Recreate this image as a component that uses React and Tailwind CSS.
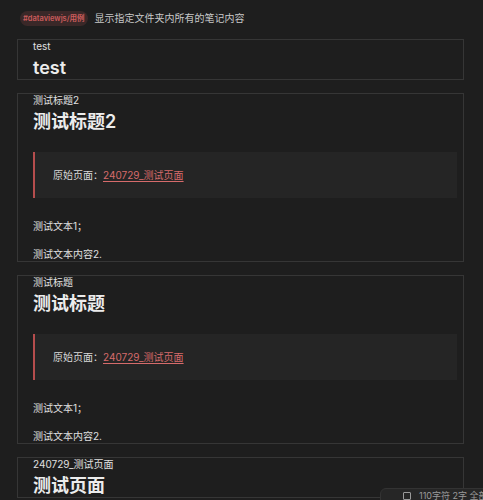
import React from 'react';

const notes = [
  { name: 'test', title: 'test', simple: true },
  { name: '测试标题2', title: '测试标题2' },
  { name: '测试标题', title: '测试标题' },
  { name: '240729_测试页面', title: '测试页面', simple: true, last: true },
];

function NoteCard({ note }) {
  return (
    <div className="border border-[#363636] pl-[15px] pr-[6px]">
      <div className="text-[10px] leading-[12px] text-[#e0e0e0]">{note.name}</div>
      <div className="mt-[5px] text-[18px] leading-[22px] font-semibold text-[#ececec]">{note.title}</div>
      {!note.simple && (
        <>
          <div className="mt-[19px] h-[46px] flex items-center border-l-2 border-[#b54d4d] bg-[#252525] pl-[18px] text-[10px] text-[#dadada]">
            原始页面：
            <span className="text-[#d66b6b] underline underline-offset-2">240729_测试页面</span>
          </div>
          <p className="mt-[21px] text-[10px] leading-[14px] text-[#e0e0e0]">测试文本1；</p>
          <p className="mt-[14px] text-[10px] leading-[14px] text-[#e0e0e0]">测试文本内容2.</p>
        </>
      )}
    </div>
  );
}

export default function App() {
  return (
    <div
      className="relative w-[483px] h-[500px] overflow-hidden bg-[#1e1e1e]"
      style={{ fontFamily: 'Inter, "Noto Sans CJK SC", sans-serif' }}
    >
      <div className="flex items-center gap-[7px] pl-[20px] pt-[11px] h-[26px]">
        <span className="rounded-full bg-[#3a2828] px-[3px] h-[15px] flex items-center text-[7.5px] font-semibold text-[#cc5c5c]">
          #dataviewjs/用例
        </span>
        <span className="text-[10px] text-[#c8c8c8]">显示指定文件夹内所有的笔记内容</span>
      </div>

      <div className="mt-[13px] ml-[17px] w-[447px] flex flex-col gap-[13px]">
        {notes.map(n => (
          <NoteCard key={n.name} note={n} />
        ))}
      </div>

      {/* status bar */}
      <div className="absolute left-[380px] top-[488px] w-[120px] h-[20px] rounded-tl-md border border-[#333] bg-[#262626] flex items-start pl-[22px] pt-[1px] gap-[8px] text-[9px] leading-[11px] text-[#9a9a9a]">
        <span className="mt-[2px] w-[8px] h-[8px] border border-[#9a9a9a] rounded-[1px]"></span>
        <span>110字符 2字 全部</span>
      </div>
    </div>
  );
}
